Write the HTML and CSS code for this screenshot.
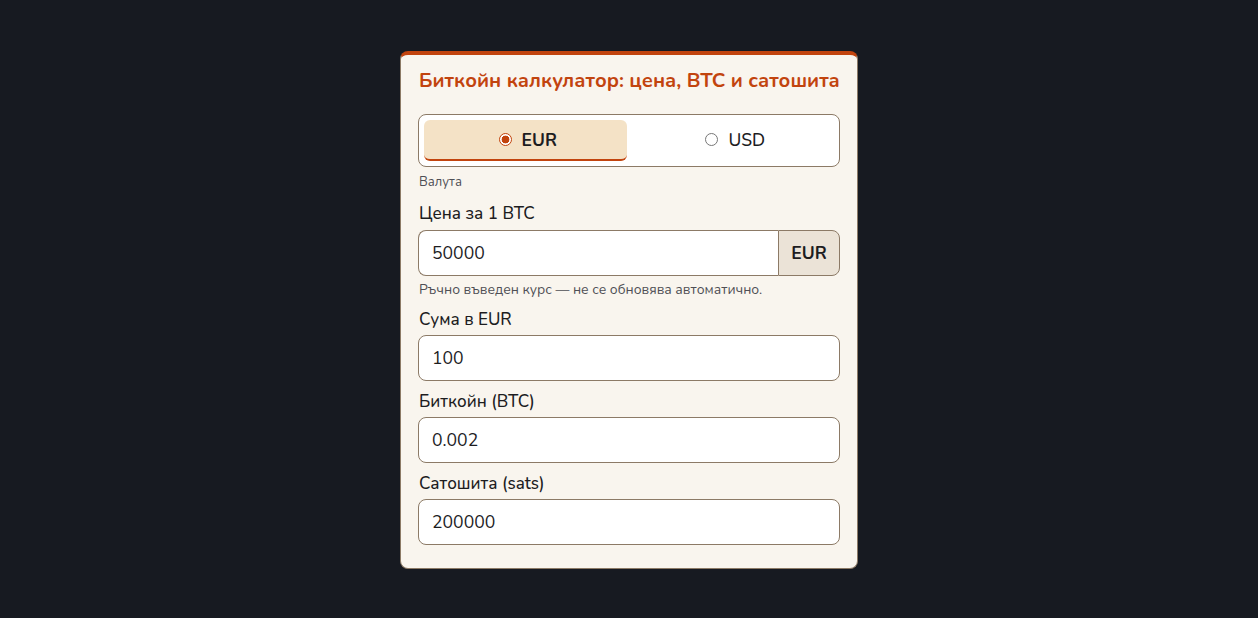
FILE: index.html
```html
<!DOCTYPE html>
<html lang="bg">
<head>
<meta charset="utf-8">
<title>Биткойн калкулатор</title>
<link rel="stylesheet" href="styles.css">
</head>
<body>
<main class="page">
  <section class="card">
    <h1 class="title">Биткойн калкулатор: цена, BTC и сатошита</h1>
    <div class="segment">
      <label class="seg-opt seg-active"><span class="radio radio-on"></span>EUR</label>
      <label class="seg-opt"><span class="radio"></span>USD</label>
    </div>
    <div class="small seg-caption">Валута</div>

    <div class="field-label first">Цена за 1 BTC</div>
    <div class="group">
      <div class="input grp-input">50000</div>
      <div class="addon">EUR</div>
    </div>
    <div class="small hint">Ръчно въведен курс — не се обновява автоматично.</div>

    <div class="field-label">Сума в EUR</div>
    <div class="input">100</div>

    <div class="field-label">Биткойн (BTC)</div>
    <div class="input">0.002</div>

    <div class="field-label">Сатошита (sats)</div>
    <div class="input">200000</div>
  </section>
</main>
</body>
</html>
```
FILE: styles.css
```css
html, body {
  margin: 0;
  padding: 0;
  background: #171a21;
  height: 100%;
}
body {
  font-family: "Nunito", "Lato", "Noto Sans", sans-serif;
  color: #1d1d1f;
}
.page {
  display: flex;
  justify-content: center;
  padding-top: 51px;
}
.card {
  box-sizing: border-box;
  width: 458px;
  background: #f9f5ee;
  border: 1px solid #8c7a66;
  border-top: 4px solid #c2440e;
  border-radius: 8px;
  padding: 13px 17px 23px 17px;
}
.title {
  margin: 0 0 20px 1px;
  font-size: 20px;
  line-height: 26px;
  font-weight: 700;
  color: #c2440e;
  white-space: nowrap;
}
.segment {
  display: grid;
  grid-template-columns: 1fr 1fr;
  gap: 5px;
  padding: 5px;
  background: #ffffff;
  border: 1px solid #8c7a66;
  border-radius: 8px;
  height: 53px;
  box-sizing: border-box;
}
.seg-opt {
  display: flex;
  align-items: center;
  justify-content: center;
  gap: 10px;
  padding-left: 5px;
  font-size: 17.5px;
  font-weight: 500;
  border-radius: 6px;
  border-bottom: 2px solid transparent;
}
.seg-active {
  background: #f4e2c6;
  border-bottom-color: #c2440e;
  font-weight: 700;
}
.radio {
  width: 11px;
  height: 11px;
  border-radius: 50%;
  border: 1px solid #777;
  background: #fff;
  box-sizing: content-box;
  flex: none;
}
.radio-on {
  border-color: #c2440e;
  background: radial-gradient(circle, #c2440e 0 3.6px, #fff 4.2px);
}
.small {
  font-size: 13px;
  line-height: 18px;
  color: #4f4f55;
  margin-left: 1px;
}
.seg-caption {
  margin-top: 6px;
}
.field-label {
  font-size: 17px;
  line-height: 20px;
  font-weight: 500;
  margin: 11px 0 5px 1px;
}
.field-label.first {
  margin-top: 13px;
  margin-bottom: 6px;
}
.input {
  box-sizing: border-box;
  height: 46px;
  display: flex;
  align-items: center;
  padding: 0 13px;
  background: #ffffff;
  border: 1px solid #8c7a66;
  border-radius: 8px;
  font-size: 17.6px;
}
.group {
  display: flex;
  height: 46px;
}
.grp-input {
  flex: 1;
  border-radius: 8px 0 0 8px;
  border-right: none;
}
.addon {
  box-sizing: border-box;
  width: 62px;
  display: flex;
  align-items: center;
  justify-content: center;
  background: #ebe3d7;
  border: 1px solid #8c7a66;
  border-radius: 0 8px 8px 0;
  font-weight: 700;
  font-size: 17.6px;
}
.hint {
  margin-top: 5px;
  font-size: 13.9px;
}
```
